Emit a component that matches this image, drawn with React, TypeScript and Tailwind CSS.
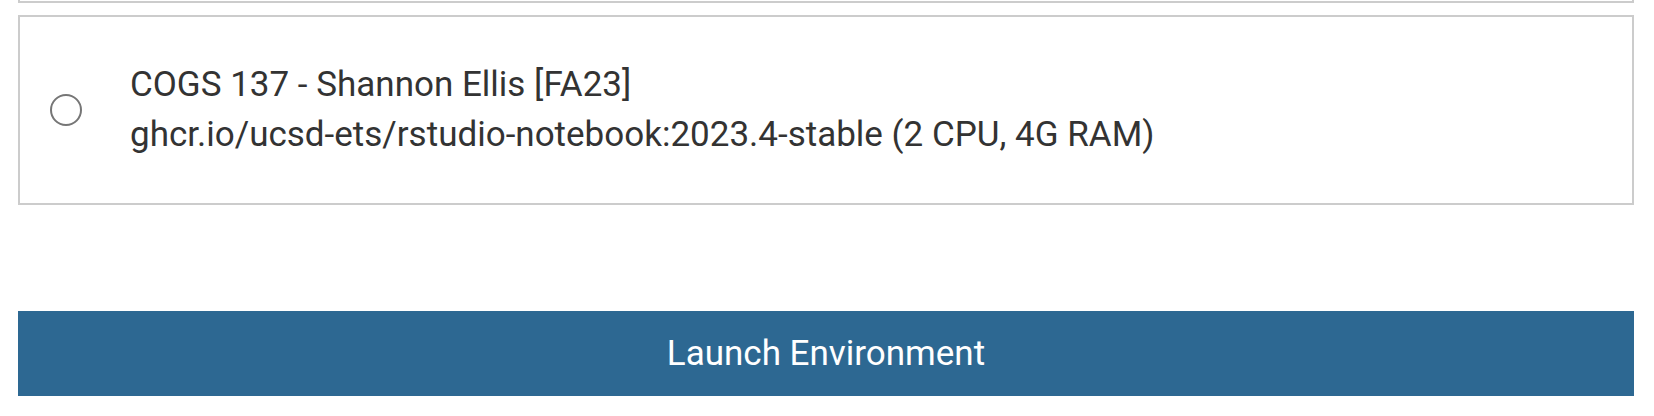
const App = () => {
  return (
    <div className="w-[1654px] h-[416px] bg-white pl-[18px] pr-[20px] font-['Roboto','Liberation_Sans',sans-serif] text-[#333333]">
      {/* previous option, cut off at the top */}
      <div className="h-[3px] border-2 border-t-0 border-[#cccccc]"></div>

      {/* profile option */}
      <label className="mt-[12px] flex items-center border-2 border-[#cccccc] py-[43px] pl-[30px]">
        <span className="w-[32px] h-[32px] rounded-full border-2 border-[#767676] bg-white shrink-0"></span>
        <span className="ml-[48px] flex flex-col text-[35px] leading-[50px]">
          <span>COGS 137 - Shannon Ellis [FA23]</span>
          <span>ghcr.io/ucsd-ets/rstudio-notebook:2023.4-stable (2 CPU, 4G RAM)</span>
        </span>
      </label>

      <button className="mt-[106px] w-full h-[85px] bg-[#2d6892] text-white text-[35px] leading-[50px]">
        Launch Environment
      </button>
    </div>
  );
};

export default App;
